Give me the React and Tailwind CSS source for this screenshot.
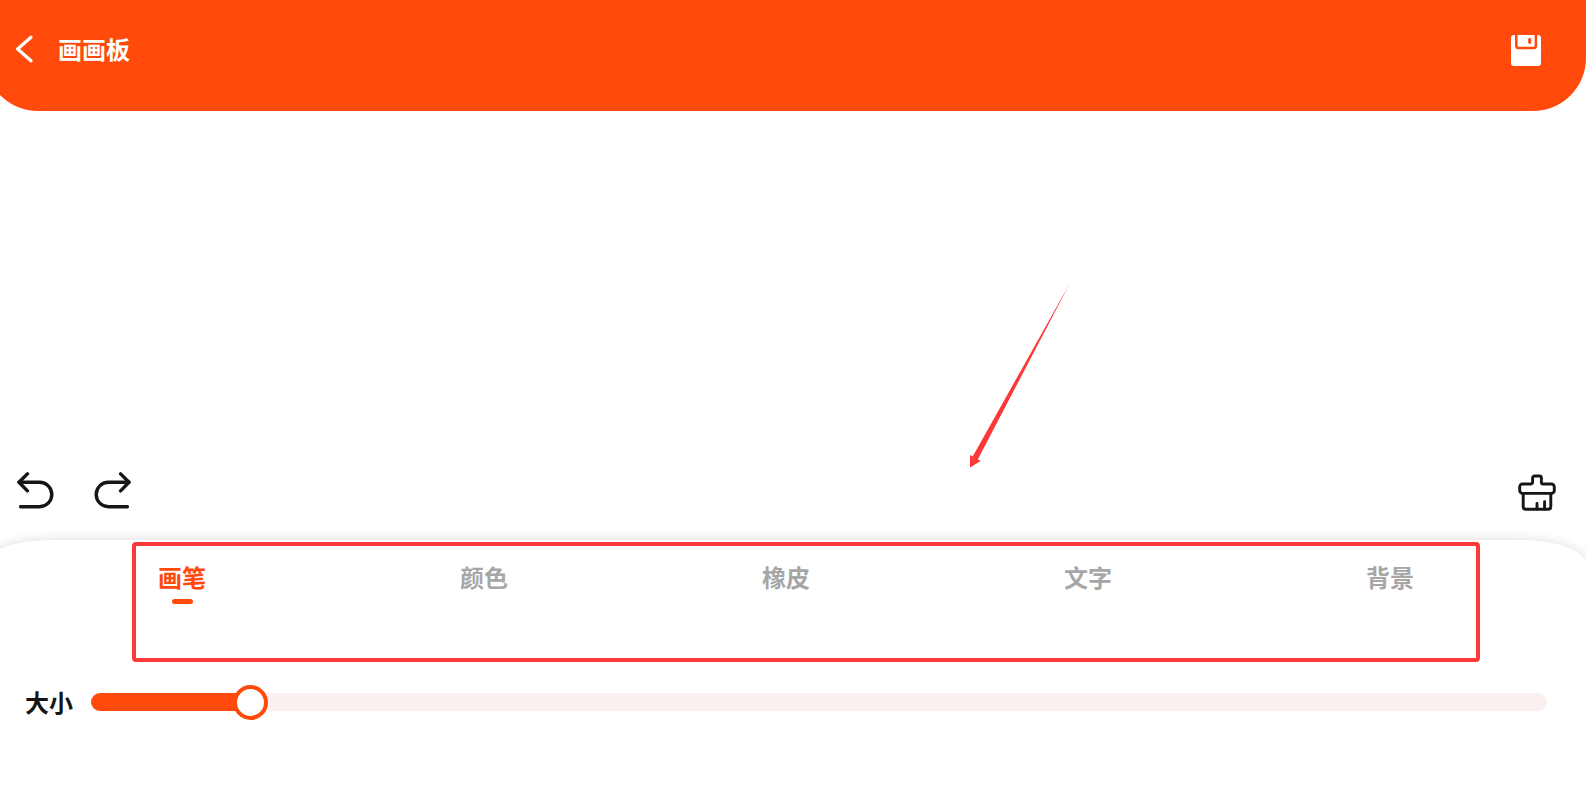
import { useState } from 'react';

const tabs = ['画笔', '颜色', '橡皮', '文字', '背景'];

function BackIcon() {
  return (
    <svg width="20" height="28" viewBox="0 0 20 28" fill="none" stroke="currentColor" strokeWidth="3.2" strokeLinecap="round" strokeLinejoin="round">
      <path d="M17 2.2 3.6 14 17 25.8" />
    </svg>
  );
}

function SaveIcon() {
  return (
    <svg width="30" height="31" viewBox="0 0 30 31" fill="none">
      <rect width="30" height="31" rx="3" fill="#fff" />
      <path d="M5.3 0v10.8a2.3 2.3 0 0 0 2.3 2.3h15a2.3 2.3 0 0 0 2.3-2.3V0" stroke="#ff4a0c" strokeWidth="2.5" />
      <rect x="17.2" y="3" width="3" height="6" rx="1.4" fill="#ff4a0c" />
    </svg>
  );
}

function UndoIcon({ className }) {
  return (
    <svg className={className} width="38" height="39" viewBox="0 0 38 39" fill="none" stroke="currentColor" strokeWidth="3.4" strokeLinecap="round" strokeLinejoin="round">
      <path d="M11.4 1.9 3 10.3l8.4 8.6" />
      <path d="M3 10.3h20.6a12.2 12.2 0 0 1 0 24.4H4.6" />
    </svg>
  );
}

function ClearIcon() {
  return (
    <svg width="38" height="37" viewBox="0 0 38 37" fill="none" stroke="currentColor" strokeWidth="2.9" strokeLinecap="round" strokeLinejoin="round">
      <path d="M4.6 10h8.2a1.8 1.8 0 0 0 1.8-1.8V4a2 2 0 0 1 2-2h4.8a2 2 0 0 1 2 2v4.2a1.8 1.8 0 0 0 1.8 1.8h8.2a2.9 2.9 0 0 1 2.9 2.9v3.6a2.9 2.9 0 0 1-2.9 2.9H4.6a2.9 2.9 0 0 1-2.9-2.9v-3.6A2.9 2.9 0 0 1 4.6 10Z" />
      <path d="M5.2 19.6v13a2.6 2.6 0 0 0 2.6 2.6h22.4a2.6 2.6 0 0 0 2.6-2.6v-13" />
      <path d="M19 29.4V35M26.6 27.6V35" />
    </svg>
  );
}

export default function App() {
  const [activeTab, setActiveTab] = useState('画笔');
  const [size, setSize] = useState(10);

  // the thumb is 35px wide, so its centre is not exactly at size%
  const fill = `calc(17.5px + (100% - 35px) * ${size / 100})`;

  return (
    <div className="min-h-screen flex flex-col overflow-hidden bg-white text-[#161616] font-['Noto_Sans_CJK_SC',sans-serif]">
      {/* Header */}
      <header className="-ml-[15px] flex items-start justify-between rounded-b-[53px] bg-[#ff4a0c] pt-[31px] pb-[45px] pl-[29px] pr-[45px] text-white">
        <div className="flex items-center gap-6">
          <button type="button" aria-label="返回" className="cursor-pointer">
            <BackIcon />
          </button>
          <h1 className="text-2xl leading-[35px] font-bold">画画板</h1>
        </div>
        <button type="button" aria-label="保存" className="mt-1 cursor-pointer">
          <SaveIcon />
        </button>
      </header>

      {/* Drawing area */}
      <main className="relative flex flex-1 items-end justify-between pl-4 pr-[30px] pb-[29px]">
        <svg className="absolute bottom-[72px] left-[970px]" width="100" height="184" viewBox="0 0 100 184" fill="#fc3838">
          <path d="M0 183.5V171l2.7 1.4L99.5 0 7.8 175.5l2.9 1.6Z" />
        </svg>
        <div className="flex gap-10">
          <button type="button" aria-label="撤销" className="cursor-pointer">
            <UndoIcon />
          </button>
          <button type="button" aria-label="重做" className="cursor-pointer">
            <UndoIcon className="-scale-x-100" />
          </button>
        </div>
        <button type="button" aria-label="清空" className="cursor-pointer">
          <ClearIcon />
        </button>
      </main>

      {/* Tool panel */}
      <section className="relative -ml-[15px] rounded-t-[66px_24px] bg-white pt-[19px] pb-[76px] shadow-[0_0_12px_rgba(0,0,0,0.14)]">
        <div className="absolute top-0.5 left-[147px] right-[106px] h-[120px] rounded border-4 border-[#fc3838] pointer-events-none" />
        <nav className="flex pl-[46px] pr-[45px]">
          {tabs.map((tab) => (
            <button
              key={tab}
              type="button"
              onClick={() => setActiveTab(tab)}
              className={`flex flex-1 flex-col items-center gap-1 text-2xl leading-9 font-bold cursor-pointer ${
                activeTab === tab ? 'text-[#ff4a0c]' : 'text-[#a6a6a6]'
              }`}
            >
              {tab}
              {activeTab === tab && <span className="h-[5px] w-[21px] rounded-full bg-[#ff4a0c]" />}
            </button>
          ))}
        </nav>

        <div className="mt-20 flex items-center gap-[18px] pl-10 pr-[39px]">
          <label htmlFor="size" className="text-2xl leading-9 font-bold">大小</label>
          <input
            id="size"
            type="range"
            min="0"
            max="100"
            value={size}
            onChange={(e) => setSize(Number(e.target.value))}
            style={{ backgroundImage: `linear-gradient(to right, #ff4a0c ${fill}, #faf0ef ${fill})` }}
            className="h-[18px] min-w-0 flex-1 appearance-none rounded-full cursor-pointer [&::-webkit-slider-thumb]:appearance-none [&::-webkit-slider-thumb]:size-[35px] [&::-webkit-slider-thumb]:rounded-full [&::-webkit-slider-thumb]:border-4 [&::-webkit-slider-thumb]:border-[#ff4a0c] [&::-webkit-slider-thumb]:bg-white"
          />
        </div>
      </section>
    </div>
  );
}
